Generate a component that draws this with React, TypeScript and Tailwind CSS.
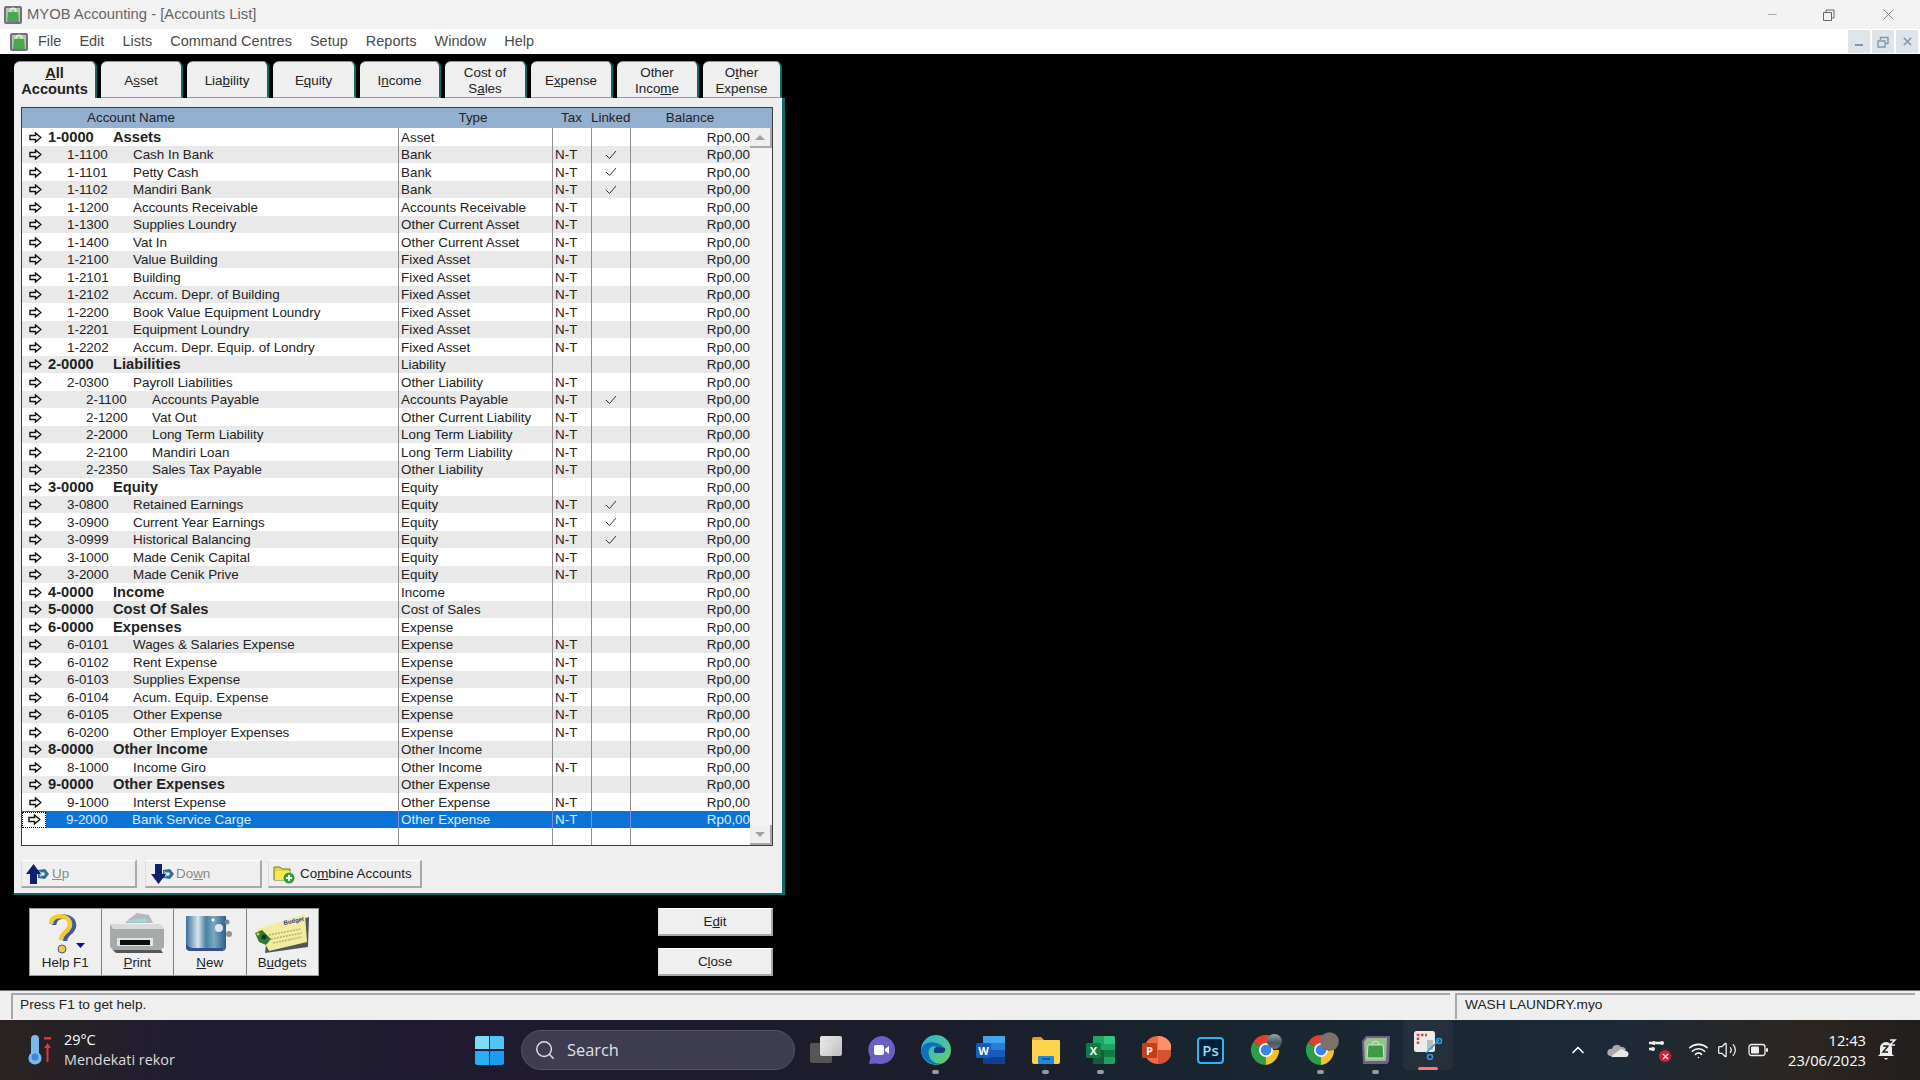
import { ReactNode } from "react";
import { Search, ChevronUp, Wifi, Volume2, X, Minus } from "lucide-react";

type Row = {
  code: string;
  name: string;
  type: string;
  level: 0 | 1 | 2;
  tax?: boolean;
  linked?: boolean;
};

const rows: Row[] = [
  { code: "1-0000", name: "Assets", type: "Asset", level: 0 },
  { code: "1-1100", name: "Cash In Bank", type: "Bank", level: 1, tax: true, linked: true },
  { code: "1-1101", name: "Petty Cash", type: "Bank", level: 1, tax: true, linked: true },
  { code: "1-1102", name: "Mandiri Bank", type: "Bank", level: 1, tax: true, linked: true },
  { code: "1-1200", name: "Accounts Receivable", type: "Accounts Receivable", level: 1, tax: true },
  { code: "1-1300", name: "Supplies Loundry", type: "Other Current Asset", level: 1, tax: true },
  { code: "1-1400", name: "Vat In", type: "Other Current Asset", level: 1, tax: true },
  { code: "1-2100", name: "Value Building", type: "Fixed Asset", level: 1, tax: true },
  { code: "1-2101", name: "Building", type: "Fixed Asset", level: 1, tax: true },
  { code: "1-2102", name: "Accum. Depr. of Building", type: "Fixed Asset", level: 1, tax: true },
  { code: "1-2200", name: "Book Value Equipment Loundry", type: "Fixed Asset", level: 1, tax: true },
  { code: "1-2201", name: "Equipment Loundry", type: "Fixed Asset", level: 1, tax: true },
  { code: "1-2202", name: "Accum. Depr. Equip. of Londry", type: "Fixed Asset", level: 1, tax: true },
  { code: "2-0000", name: "Liabilities", type: "Liability", level: 0 },
  { code: "2-0300", name: "Payroll Liabilities", type: "Other Liability", level: 1, tax: true },
  { code: "2-1100", name: "Accounts Payable", type: "Accounts Payable", level: 2, tax: true, linked: true },
  { code: "2-1200", name: "Vat Out", type: "Other Current Liability", level: 2, tax: true },
  { code: "2-2000", name: "Long Term Liability", type: "Long Term Liability", level: 2, tax: true },
  { code: "2-2100", name: "Mandiri Loan", type: "Long Term Liability", level: 2, tax: true },
  { code: "2-2350", name: "Sales Tax Payable", type: "Other Liability", level: 2, tax: true },
  { code: "3-0000", name: "Equity", type: "Equity", level: 0 },
  { code: "3-0800", name: "Retained Earnings", type: "Equity", level: 1, tax: true, linked: true },
  { code: "3-0900", name: "Current Year Earnings", type: "Equity", level: 1, tax: true, linked: true },
  { code: "3-0999", name: "Historical Balancing", type: "Equity", level: 1, tax: true, linked: true },
  { code: "3-1000", name: "Made Cenik Capital", type: "Equity", level: 1, tax: true },
  { code: "3-2000", name: "Made Cenik Prive", type: "Equity", level: 1, tax: true },
  { code: "4-0000", name: "Income", type: "Income", level: 0 },
  { code: "5-0000", name: "Cost Of Sales", type: "Cost of Sales", level: 0 },
  { code: "6-0000", name: "Expenses", type: "Expense", level: 0 },
  { code: "6-0101", name: "Wages & Salaries Expense", type: "Expense", level: 1, tax: true },
  { code: "6-0102", name: "Rent Expense", type: "Expense", level: 1, tax: true },
  { code: "6-0103", name: "Supplies Expense", type: "Expense", level: 1, tax: true },
  { code: "6-0104", name: "Acum. Equip. Expense", type: "Expense", level: 1, tax: true },
  { code: "6-0105", name: "Other Expense", type: "Expense", level: 1, tax: true },
  { code: "6-0200", name: "Other Employer Expenses", type: "Expense", level: 1, tax: true },
  { code: "8-0000", name: "Other Income", type: "Other Income", level: 0 },
  { code: "8-1000", name: "Income Giro", type: "Other Income", level: 1, tax: true },
  { code: "9-0000", name: "Other Expenses", type: "Other Expense", level: 0 },
  { code: "9-1000", name: "Interst Expense", type: "Other Expense", level: 1, tax: true },
  { code: "9-2000", name: "Bank Service Carge", type: "Other Expense", level: 1, tax: true },
];

const codeClass = {
  0: "ml-[6px] w-[65px]",
  1: "ml-[25px] w-[66px]",
  2: "ml-[44px] w-[66px]",
};

const tabs: { label: ReactNode; width: string }[] = [
  { label: <><u>A</u>ll<br />Accounts</>, width: "w-[83px]" },
  { label: <>A<u>s</u>set</>, width: "w-[82px]" },
  { label: <>Lia<u>b</u>ility</>, width: "w-[82px]" },
  { label: <>E<u>q</u>uity</>, width: "w-[83px]" },
  { label: <>I<u>n</u>come</>, width: "w-[81px]" },
  { label: <>Cost of<br />S<u>a</u>les</>, width: "w-[82px]" },
  { label: <>E<u>x</u>pense</>, width: "w-[82px]" },
  { label: <>Other<br />Inco<u>m</u>e</>, width: "w-[82px]" },
  { label: <>O<u>t</u>her<br />Expense</>, width: "w-[79px]" },
];

const MyobIcon = ({ size = 18 }: { size?: number }) => (
  <svg width={size} height={size} viewBox="0 0 20 20">
    <rect x="1" y="1" width="18" height="18" rx="2" fill="#7a6a8a" />
    <path d="M3 3h14v14H3z" fill="#a9cf9c" />
    <path d="M5 7h10l1 10H4z" fill="#4aa84e" />
    <path d="M7 7c0-5 6-5 6 0" fill="none" stroke="#eaf5e2" strokeWidth="1.400" />
  </svg>
);

const ArrowIcon = () => (
  <svg width="13" height="11" viewBox="0 0 13 11" className="shrink-0">
    <path d="M1 3.500h5.500V1l5.300 4.500L6.500 10V7.500H1z" fill="#fff" stroke="#111" strokeWidth="1.400" />
  </svg>
);

const CheckIcon = () => (
  <svg width="12" height="10" viewBox="0 0 12 10">
    <path d="M1 5l3.500 3.500L11 1" fill="none" stroke="#333" strokeWidth="1" />
  </svg>
);

const MoveIcon = ({ down }: { down?: boolean }) => (
  <svg width="24" height="22" viewBox="0 0 24 22" className="shrink-0">
    <path d="M12 7l7-1 4 5-4 5-7-1z" fill="#2f6f96" />
    <path d="M13 8l6 3-5 3z" fill="#9fc6d8" />
    <circle cx="17" cy="11" r="1.800" fill="#e2eef3" />
    <path
      d={down ? "M4 1h7v10h4l-7.500 10L0 11h4z" : "M7.500 1L15 11h-4v10H4V11H0z"}
      fill="#10206e"
    />
  </svg>
);

const FolderPlusIcon = () => (
  <svg width="22" height="20" viewBox="0 0 22 20" className="shrink-0">
    <path d="M1 3h6l2 2h8v11H1z" fill="#e6d83a" stroke="#7c7420" />
    <path d="M2 7h15v9H2z" fill="#f3ea58" />
    <circle cx="16" cy="14" r="5.500" fill="#2f9e3f" />
    <path d="M16 11v6M13 14h6" stroke="#fff" strokeWidth="1.800" />
  </svg>
);

const HelpIcon = () => (
  <svg width="48" height="42" viewBox="0 0 48 42">
    <path d="M11 11c0-12 21-11 20 1-.500 7-9 7-9 15" fill="none" stroke="#3c5aa8" strokeWidth="4.500" transform="translate(2 1)" />
    <path d="M10 11c0-11 20-10 19 1-.500 7-9 7-9 15" fill="none" stroke="#f6c92e" strokeWidth="4.500" />
    <circle cx="21" cy="36" r="4" fill="#f6c92e" stroke="#3c5aa8" />
    <path d="M35 30h9l-4.500 5z" fill="#10108a" />
  </svg>
);

const PrinterIcon = () => (
  <svg width="60" height="44" viewBox="0 0 60 44">
    <path d="M22 8l8-6 12 2 4 8H18z" fill="#b5b9bb" />
    <path d="M22 9l16-2 3 4H20z" fill="#8fdbe0" />
    <path d="M3 13h50l4 5v18l-3 3H6l-3-3z" fill="#a7aaab" />
    <path d="M3 13h50l4 5H6z" fill="#d8dbdb" />
    <path d="M10 27h36v8H10z" fill="#e5e5e5" />
    <path d="M13 29h30v5H13z" fill="#0d0d0d" />
    <path d="M6 39h48l2 3H9z" fill="#555" />
  </svg>
);

const NewIcon = () => (
  <svg width="54" height="42" viewBox="0 0 54 42">
    <defs>
      <linearGradient id="newbook" x1="0" x2="1" y1="0" y2="0">
        <stop offset="0" stopColor="#3b6f9c" />
        <stop offset="0.3" stopColor="#d8e6ea" />
        <stop offset="0.5" stopColor="#47829f" />
        <stop offset="0.7" stopColor="#7ca8c0" />
        <stop offset="1" stopColor="#2d5c88" />
      </linearGradient>
    </defs>
    <path d="M3 3h40v32q-1 3-4 3H8q-5 0-5-4z" fill="url(#newbook)" />
    <path d="M3 30q2 5 7 5h30v3H8q-5 0-5-4z" fill="#33508f" />
    <circle cx="36" cy="15" r="4" fill="#fff" opacity="0.8" />
    <circle cx="44" cy="9" r="2.500" fill="#789" />
    <circle cx="46" cy="21" r="3" fill="#8a94a0" />
    <circle cx="30" cy="7" r="1.500" fill="#fff" />
  </svg>
);

const BudgetIcon = () => (
  <svg width="58" height="42" viewBox="0 0 58 42">
    <path d="M12 40l43-6 1-30-41 11z" fill="#555" />
    <path d="M4 16L52 1l2 28-38 9z" fill="#f3eb9f" />
    <text x="31" y="12" fontSize="6" fontWeight="700" fill="#283a86" transform="rotate(-12 31 12)">
      Budget
    </text>
    <path d="M16 22l32-6M18 26l31-6M20 30l29-6" stroke="#b9b06a" strokeWidth="1.500" strokeDasharray="2 1" />
    <path d="M2 20l7-3 9 9-5 6-7-3z" fill="#2f7c35" />
    <circle cx="11" cy="24" r="2.500" fill="#16341c" />
    <circle cx="5" cy="21" r="1.500" fill="#e7c93a" />
  </svg>
);

const ChromeIcon = ({ badge }: { badge: string }) => (
  <div className="relative h-[30px] w-[30px]">
    <svg width="30" height="30" viewBox="0 0 30 30">
      <path d="M15 15L2 7.500A15 15 0 0 1 28 7.500z" fill="#e0402f" />
      <path d="M15 15H28A15 15 0 0 1 15 30z" fill="#fbc02d" />
      <path d="M15 15L15 30A15 15 0 0 1 2 7.500z" fill="#2f9e48" />
      <circle cx="15" cy="15" r="7" fill="#fff" />
      <circle cx="15" cy="15" r="5.300" fill="#3a82ee" />
    </svg>
    <span className={`absolute -right-[1px] -top-[1px] h-[15px] w-[15px] rounded-full ${badge}`} />
  </div>
);

const TaskIcon = ({ children, dot }: { children: ReactNode; dot?: boolean }) => (
  <div className="relative flex h-[60px] w-[55px] shrink-0 items-center justify-center">
    {children}
    {dot && <span className="absolute bottom-[6px] h-[4px] w-[7px] rounded-full bg-[#9a9a9a]" />}
  </div>
);

const Btn = ({ children, className }: { children: ReactNode; className: string }) => (
  <div
    className={`flex h-[28px] items-center border-t border-l border-t-white border-l-[#dcdcdc] border-r-2 border-b-2 border-r-[#a8a8a8] border-b-[#a8a8a8] bg-[#efefef] pt-[1px] ${className}`}
  >
    {children}
  </div>
);

const ToolButton = ({ icon, label, width }: { icon: ReactNode; label: ReactNode; width: string }) => (
  <div className={`flex h-full flex-col items-center ${width}`}>
    <div className="flex h-[46px] items-end justify-center pt-[3px]">{icon}</div>
    <div className="leading-[16px]">{label}</div>
  </div>
);

export default function App() {
  return (
    <div className="flex h-screen w-[1920px] flex-col overflow-hidden bg-black font-['Liberation_Sans',sans-serif] text-[13.4px] text-[#222]">
      {/* Title bar */}
      <div className="flex h-[29px] shrink-0 items-center bg-[#f3f3f3] pl-[3px] text-[14.8px] text-[#666]">
        <MyobIcon size={20} />
        <span className="ml-[4px]">MYOB Accounting - [Accounts List]</span>
        <div className="ml-auto flex items-center text-[#666]">
          <Minus size={13} strokeWidth={1} />
          <svg width="14" height="14" viewBox="0 0 14 14" className="ml-[43px]">
            <path d="M1.500 4.500h8v8h-8zM4 4.500V2h8v8H9.500" fill="none" stroke="#666" strokeWidth="1" />
          </svg>
          <X size={19} strokeWidth={1} className="ml-[43px] mr-[22px]" />
        </div>
      </div>

      {/* Menu bar */}
      <div className="flex h-[25px] shrink-0 items-center bg-white pl-[9px] text-[14.5px] text-[#4a4a4a]">
        <MyobIcon size={20} />
        <div className="ml-[9px] flex gap-[18px]">
          {["File", "Edit", "Lists", "Command Centres", "Setup", "Reports", "Window", "Help"].map((m) => (
            <span key={m}>{m}</span>
          ))}
        </div>
        <div className="ml-auto mr-[2px] flex h-full items-end gap-[2px] pb-[1px]">
          <div className="flex h-[23px] w-[22px] items-center justify-center bg-[#dfe4ea]">
            <span className="mt-[6px] h-[2px] w-[8px] bg-[#8096b0]" />
          </div>
          <div className="flex h-[23px] w-[22px] items-center justify-center bg-[#dfe4ea]">
            <svg width="12" height="12" viewBox="0 0 12 12">
              <path d="M1 5h7v6H1zM3.500 4V1.500H11v6H9" fill="none" stroke="#8096b0" strokeWidth="1.400" />
            </svg>
          </div>
          <div className="flex h-[23px] w-[22px] items-center justify-center bg-[#dfe4ea]">
            <X size={13} strokeWidth={3} className="text-[#8096b0]" />
          </div>
        </div>
      </div>

      {/* MDI area */}
      <div className="flex min-h-0 flex-1 flex-col bg-black pl-[14px] pt-[7px]">
        <div className="flex h-[37px] w-[771px] gap-[4px]">
          {tabs.map((tab, i) => (
            <div
              key={i}
              className={`flex h-full items-center justify-center rounded-t-[6px] border-t border-r-2 border-t-[#7f9a9a] border-r-[#0c6a6a] bg-[#efefef] pt-[2px] text-center leading-[16px] ${tab.width} ${
                i === 0 ? "text-[14.6px] font-bold" : "border-b border-b-[#9a9a9a]"
              }`}
            >
              <div>{tab.label}</div>
            </div>
          ))}
        </div>

        <div className="h-[797px] w-[771px] shrink-0 border-r-[3px] border-b-2 border-r-[#0c6a6a] border-b-[#0c6a6a] bg-[#efefef] px-[7px] pt-[9px]">
          {/* Accounts table */}
          <div className="flex h-[739px] w-[752px] flex-col border border-[#3c3c3c]">
            <div className="flex h-[20px] shrink-0 items-center bg-[#93b0cf] leading-none">
              <div className="w-[376px] pl-[65px]">Account Name</div>
              <div className="w-[154px] pr-[4px] text-center">Type</div>
              <div className="w-[39px] text-center">Tax</div>
              <div className="w-[39px] text-center">Linked</div>
              <div className="w-[120px] text-center">Balance</div>
            </div>
            <div className="flex min-h-0 flex-1">
              <div className="flex w-[728px] flex-col bg-white">
                {rows.map((r, i) => {
                  const selected = r.code === "9-2000";
                  const stripe = selected
                    ? "bg-[#0a74d6] text-[#dcebff]"
                    : i % 2 === 1
                      ? "bg-[#e9e9e9]"
                      : "bg-white";
                  const line = selected ? "border-l-[#7c8fe0]" : "border-l-[#8e8e8e]";
                  return (
                    <div key={r.code} className={`flex h-[17.5px] shrink-0 items-center leading-none ${stripe}`}>
                      <div className={`flex h-full w-[376px] items-center pt-[1px] ${r.level === 0 ? "text-[14.7px] font-bold" : ""}`}>
                        {selected ? (
                          <span className="flex h-full w-[24px] shrink-0 items-center justify-center border border-dotted border-black bg-white">
                            <ArrowIcon />
                          </span>
                        ) : (
                          <span className="ml-[7px] flex w-[13px] shrink-0">
                            <ArrowIcon />
                          </span>
                        )}
                        <span className={`shrink-0 ${selected ? "ml-[20px] w-[66px]" : codeClass[r.level]}`}>{r.code}</span>
                        <span className="whitespace-nowrap">{r.name}</span>
                      </div>
                      <div className={`flex h-full w-[154px] items-center border-l pl-[2px] pt-[1px] ${line}`}>{r.type}</div>
                      <div className={`flex h-full w-[39px] items-center border-l pl-[2px] pt-[1px] ${line}`}>{r.tax ? "N-T" : ""}</div>
                      <div className={`flex h-full w-[39px] items-center justify-center border-l pt-[1px] ${line}`}>
                        {r.linked && <CheckIcon />}
                      </div>
                      <div className={`flex h-full w-[120px] items-center justify-end border-l pt-[1px] ${line}`}>Rp0,00</div>
                    </div>
                  );
                })}
                <div className="flex flex-1">
                  <div className="w-[376px]" />
                  <div className="w-[154px] border-l border-l-[#8e8e8e]" />
                  <div className="w-[39px] border-l border-l-[#8e8e8e]" />
                  <div className="w-[39px] border-l border-l-[#8e8e8e]" />
                  <div className="w-[120px] border-l border-l-[#8e8e8e]" />
                </div>
              </div>
              {/* Scroll bar */}
              <div className="flex w-[22px] flex-col justify-between bg-[#f4f4f4]">
                <div className="flex h-[20px] items-center justify-center border-r-2 border-b-2 border-r-[#a8a8a8] border-b-[#a8a8a8] bg-[#efefef]">
                  <span className="h-0 w-0 border-x-[5px] border-b-[5px] border-x-transparent border-b-[#a0a0a0]" />
                </div>
                <div className="flex h-[20px] items-center justify-center border-r-2 border-b-2 border-r-[#a8a8a8] border-b-[#a8a8a8] bg-[#efefef]">
                  <span className="h-0 w-0 border-x-[5px] border-t-[5px] border-x-transparent border-t-[#a0a0a0]" />
                </div>
              </div>
            </div>
          </div>

          {/* Up / Down / Combine */}
          <div className="mt-[14px] flex">
            <Btn className="w-[116px] pl-[4px] text-[#8a8a8a]">
              <MoveIcon />
              <span className="ml-[2px]"><u>U</u>p</span>
            </Btn>
            <Btn className="ml-[8px] w-[117px] pl-[5px] text-[#8a8a8a]">
              <MoveIcon down />
              <span className="ml-[1px]">Do<u>w</u>n</span>
            </Btn>
            <Btn className="ml-[6px] w-[154px] pl-[4px]">
              <FolderPlusIcon />
              <span className="ml-[5px]">Co<u>m</u>bine Accounts</span>
            </Btn>
          </div>
        </div>

        {/* Bottom toolbar */}
        <div className="ml-[15px] mt-[13px] flex h-[68px] w-[744px] items-start justify-between">
          <div className="flex h-[68px] w-[290px] divide-x divide-[#808080] border border-[#9a9a9a] bg-[#efefef]">
            <ToolButton icon={<HelpIcon />} label="Help F1" width="w-[72px]" />
            <ToolButton icon={<PrinterIcon />} label={<><u>P</u>rint</>} width="w-[73px]" />
            <ToolButton icon={<NewIcon />} label={<><u>N</u>ew</>} width="w-[73px]" />
            <ToolButton icon={<BudgetIcon />} label={<>B<u>u</u>dgets</>} width="w-[72px]" />
          </div>
          <div className="flex flex-col gap-[12px]">
            <Btn className="w-[115px] justify-center">E<u>d</u>it</Btn>
            <Btn className="w-[115px] justify-center">C<u>l</u>ose</Btn>
          </div>
        </div>
      </div>

      {/* Status bar */}
      <div className="flex h-[30px] shrink-0 gap-[5px] border-t border-t-[#777] bg-[#f0f0f0] pl-[11px] pt-[2px] text-[13.7px]">
        <div className="h-[26px] w-[1439px] border-t-2 border-l-2 border-t-[#a8a8a8] border-l-[#a8a8a8] bg-[#efefef] pl-[7px] leading-[19px]">
          Press F1 to get help.
        </div>
        <div className="h-[26px] w-[460px] border-t-2 border-l-2 border-t-[#a8a8a8] border-l-[#a8a8a8] bg-[#efefef] pl-[8px] leading-[19px]">
          WASH LAUNDRY.myo
        </div>
      </div>

      {/* Taskbar */}
      <div className="flex h-[60px] shrink-0 items-center bg-[linear-gradient(90deg,#2b2320_0%,#201c33_10%,#1f1a30_28%,#1b1d2a_48%,#18262f_65%,#1c2a38_84%,#2d2620_94%,#221e1e_100%)] font-['Open_Sans',sans-serif] text-white">
        <div className="flex w-[475px] shrink-0 items-center pl-[28px]">
          <svg width="24" height="30" viewBox="0 0 24 30">
            <path d="M3 4a4 4 0 0 1 8 0v14a6.500 6.500 0 1 1-8 0z" fill="#7db8ec" />
            <circle cx="7" cy="22" r="3.500" fill="#3f86d8" />
            <path d="M16 2h7v2.500h-7z" fill="#e5333a" />
            <path d="M19.500 8l3.500 5h-2.500v14h-2V13H16z" fill="#e5333a" />
          </svg>
          <div className="ml-[12px] text-[14.4px] leading-[20px]">
            <div>29°C</div>
            <div className="text-[#dcdcdc]">Mendekati rekor</div>
          </div>
        </div>

        <div className="grid h-[29px] w-[29px] shrink-0 grid-cols-2 gap-[1.500px]">
          <span className="rounded-tl-[2px] bg-[#7ddcfb]" />
          <span className="rounded-tr-[2px] bg-[#4fc6f8]" />
          <span className="rounded-bl-[2px] bg-[#25b0f5]" />
          <span className="rounded-br-[2px] bg-[#1a9cf0]" />
        </div>

        <div className="ml-[17px] flex h-[40px] w-[274px] shrink-0 items-center rounded-full border border-[#54546a] bg-[#3d3c50] pl-[12px] text-[16.4px] text-[#e0e0e4]">
          <Search size={22} strokeWidth={1.600} />
          <span className="ml-[11px]">Search</span>
        </div>

        <div className="ml-[3px] flex">
          <TaskIcon>
            <div className="relative h-[30px] w-[30px]">
              <span className="absolute left-[-1px] top-[8px] h-[20px] w-[22px] rounded-[2px] bg-[#555]" />
              <span className="absolute right-[-1px] top-[1px] h-[20px] w-[22px] rounded-[2px] bg-[linear-gradient(135deg,#fff,#d0d0d0)] opacity-90" />
            </div>
          </TaskIcon>
          <TaskIcon>
            <svg width="30" height="30" viewBox="0 0 30 30">
              <path d="M15 1a14 14 0 1 1-4 27.400L3 29l1.500-6.500A14 14 0 0 1 15 1z" fill="#6a5fc4" />
              <rect x="8" y="10" width="10" height="10" rx="2" fill="#fff" />
              <path d="M19 14l4-3v8l-4-3z" fill="#fff" />
            </svg>
          </TaskIcon>
          <TaskIcon dot>
            <svg width="30" height="30" viewBox="0 0 30 30">
              <defs>
                <linearGradient id="edgeg" x1="0" x2="1" y1="0" y2="1">
                  <stop offset="0" stopColor="#2bb3e0" />
                  <stop offset="1" stopColor="#66d05c" />
                </linearGradient>
              </defs>
              <circle cx="15" cy="15" r="15" fill="url(#edgeg)" />
              <path d="M0 15C2 7 12 5 20 10c5 3 4 8 0 8h-5c-3 0-3-5 1-6-6-3-11 3-7 11 2 4 8 7 13 5-10 5-22-3-22-13z" fill="#0e70c0" />
              <path d="M16 12c-4 1-4 6-1 6h5c3 0 5-2 4-5" fill="#123f7c" />
            </svg>
          </TaskIcon>
          <TaskIcon>
            <svg width="30" height="30" viewBox="0 0 30 30">
              <path d="M7 1h20a2 2 0 0 1 2 2v24a2 2 0 0 1-2 2H7z" fill="#2b7cd3" />
              <path d="M7 1h22v7H7z" fill="#41a5ee" />
              <path d="M7 15h22v7H7z" fill="#185abd" />
              <path d="M7 22h22v5a2 2 0 0 1-2 2H7z" fill="#103f91" />
              <rect x="0" y="8" width="15" height="15" rx="1.500" fill="#185abd" />
              <text x="7.500" y="20" fontSize="11" fontWeight="700" fill="#fff" textAnchor="middle">W</text>
            </svg>
          </TaskIcon>
          <TaskIcon dot>
            <svg width="30" height="30" viewBox="0 0 30 30">
              <path d="M1 4a2 2 0 0 1 2-2h7l3 3h-12z" fill="#e0a21a" />
              <path d="M1 5h27a1 1 0 0 1 1 1v21a2 2 0 0 1-2 2H3a2 2 0 0 1-2-2z" fill="#fcd34a" />
              <path d="M8 21h14a1 1 0 0 1 1 1v7H7v-7a1 1 0 0 1 1-1z" fill="#1f8ad8" />
              <path d="M11 24h8" stroke="#0a4f92" strokeWidth="1.500" />
            </svg>
          </TaskIcon>
          <TaskIcon dot>
            <svg width="30" height="30" viewBox="0 0 30 30">
              <path d="M7 1h20a2 2 0 0 1 2 2v24a2 2 0 0 1-2 2H7z" fill="#21a366" />
              <path d="M18 1h9a2 2 0 0 1 2 2v6H18z" fill="#33c481" />
              <path d="M7 15h11v14H7z" fill="#185c37" />
              <path d="M18 15h11v7H18z" fill="#107c41" />
              <rect x="0" y="8" width="15" height="15" rx="1.500" fill="#107c41" />
              <text x="7.500" y="20" fontSize="11" fontWeight="700" fill="#fff" textAnchor="middle">X</text>
            </svg>
          </TaskIcon>
          <TaskIcon>
            <svg width="30" height="30" viewBox="0 0 30 30">
              <circle cx="17" cy="15" r="14" fill="#ed6c47" />
              <path d="M17 1a14 14 0 0 1 14 14H17z" fill="#ff8f6b" />
              <path d="M17 15h14a14 14 0 0 1-14 14z" fill="#d35230" />
              <rect x="1" y="8" width="15" height="15" rx="1.500" fill="#c43e1c" />
              <text x="8.500" y="20" fontSize="11" fontWeight="700" fill="#fff" textAnchor="middle">P</text>
            </svg>
          </TaskIcon>
          <TaskIcon>
            <div className="flex h-[27px] w-[27px] items-center justify-center rounded-[4px] border-2 border-[#2fb5f5] bg-[#061e36] text-[15px] font-semibold text-[#9ad7fb]">
              Ps
            </div>
          </TaskIcon>
          <TaskIcon>
            <ChromeIcon badge="bg-[linear-gradient(180deg,#9aa8a8,#46565c_60%,#6d7a70)]" />
          </TaskIcon>
          <TaskIcon dot>
            <ChromeIcon badge="bg-[#7d7068] scale-125" />
          </TaskIcon>
          <TaskIcon dot>
            <svg width="30" height="30" viewBox="0 0 30 30">
              <path d="M5 1h24l-1 26-2 2H2L1 6z" fill="#7a5a90" />
              <path d="M6 3h20l-1 23H4L3 7z" fill="#8fc48a" />
              <path d="M7 10h15l1 13H6z" fill="#3f9a45" stroke="#cfe8c8" />
              <path d="M11 10c0-5 7-5 7 0" fill="none" stroke="#cfe8c8" strokeWidth="1.200" />
            </svg>
          </TaskIcon>
          <div className="relative flex h-[50px] w-[50px] shrink-0 items-center justify-center rounded-[5px] bg-[#26303c]">
            <svg width="30" height="30" viewBox="0 0 30 30">
              <rect x="1" y="1" width="21" height="21" rx="2.500" fill="#ececec" />
              <path d="M5 14V5h9" fill="none" stroke="#d5452f" strokeWidth="2.500" strokeDasharray="2.500 1.500" />
              <path d="M14 10h6v10h-6z" fill="#bcbcbc" />
              <path d="M13 23l13-13" stroke="#2a9de0" strokeWidth="1.500" />
              <circle cx="26" cy="11" r="2.500" fill="none" stroke="#2a9de0" strokeWidth="1.500" />
              <circle cx="17" cy="27" r="2.500" fill="none" stroke="#2a9de0" strokeWidth="1.500" />
            </svg>
            <span className="absolute bottom-0 h-[3px] w-[20px] rounded-full bg-[#f0816c]" />
          </div>
        </div>

        {/* Tray */}
        <div className="ml-[115px] flex items-center">
          <ChevronUp size={20} strokeWidth={2} />
          <svg width="22" height="14" viewBox="0 0 22 14" className="ml-[19px]">
            <path d="M5 6a5 5 0 0 1 9-2 4 4 0 0 1 5 3L8 13H3a3 3 0 0 1 2-7z" fill="#a9a9a9" />
            <path d="M4 14h14a3 3 0 0 0 1-6l-5-2-7 5z" fill="#e8e8e8" />
          </svg>
          <div className="relative ml-[19px] h-[20px] w-[20px]">
            <svg width="18" height="14" viewBox="0 0 18 14">
              <path d="M1 3h4M8 3h5M1 9h3" stroke="#eee" strokeWidth="2.500" />
              <circle cx="6" cy="3" r="2" fill="#eee" />
              <circle cx="14" cy="3" r="2" fill="#eee" />
              <circle cx="5" cy="9" r="2" fill="#eee" />
            </svg>
            <span className="absolute bottom-[-2px] right-[-3px] flex h-[12px] w-[12px] items-center justify-center rounded-full bg-[#d0213a]">
              <X size={9} strokeWidth={3} />
            </span>
          </div>
          <Wifi size={21} strokeWidth={1.800} className="ml-[20px]" />
          <Volume2 size={20} strokeWidth={1.400} className="ml-[8px]" />
          <svg width="21" height="14" viewBox="0 0 21 14" className="ml-[11px]">
            <rect x="1" y="1.500" width="16" height="11" rx="2.500" fill="none" stroke="#eee" strokeWidth="1.300" />
            <rect x="3" y="3.500" width="8" height="7" rx="1" fill="#eee" />
            <rect x="18" y="5" width="2" height="4" rx="1" fill="#eee" />
          </svg>
        </div>
        <div className="ml-auto flex items-center pr-[23px]">
          <div className="text-right text-[14.7px] leading-[20px]">
            <div>12:43</div>
            <div>23/06/2023</div>
          </div>
          <svg width="20" height="22" viewBox="0 0 20 22" className="ml-[11px]">
            <path d="M3 15V9a6 6 0 0 1 12 0v6l2 2H1z" fill="#eee" />
            <path d="M7 19h4l-2 2z" fill="#eee" />
            <path d="M6 7h5l-5 6h5" fill="none" stroke="#222" strokeWidth="1.500" />
            <path d="M13 1h5l-5 5h5" fill="none" stroke="#eee" strokeWidth="1.500" />
          </svg>
        </div>
      </div>
    </div>
  );
}
